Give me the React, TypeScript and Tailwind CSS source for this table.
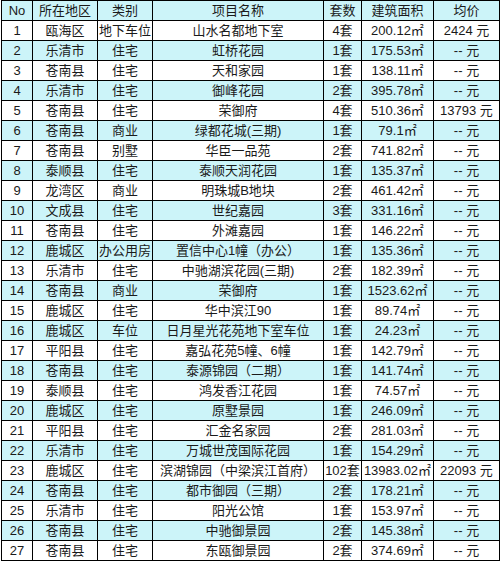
const rows: [string, string, string, string, string, string, string][] = [
  ["1", "瓯海区", "地下车位", "山水名都地下室", "4套", "200.12㎡", "2424 元"],
  ["2", "乐清市", "住宅", "虹桥花园", "1套", "175.53㎡", "-- 元"],
  ["3", "苍南县", "住宅", "天和家园", "1套", "138.11㎡", "-- 元"],
  ["4", "乐清市", "住宅", "御峰花园", "2套", "395.78㎡", "-- 元"],
  ["5", "苍南县", "住宅", "荣御府", "4套", "510.36㎡", "13793 元"],
  ["6", "苍南县", "商业", "绿都花城(三期)", "1套", "79.1㎡", "-- 元"],
  ["7", "苍南县", "别墅", "华臣一品苑", "2套", "741.82㎡", "-- 元"],
  ["8", "泰顺县", "住宅", "泰顺天润花园", "1套", "135.37㎡", "-- 元"],
  ["9", "龙湾区", "商业", "明珠城B地块", "2套", "461.42㎡", "-- 元"],
  ["10", "文成县", "住宅", "世纪嘉园", "3套", "331.16㎡", "-- 元"],
  ["11", "苍南县", "住宅", "外滩嘉园", "1套", "146.22㎡", "-- 元"],
  ["12", "鹿城区", "办公用房", "置信中心1幢（办公）", "1套", "135.36㎡", "-- 元"],
  ["13", "乐清市", "住宅", "中驰湖滨花园(三期)", "2套", "182.39㎡", "-- 元"],
  ["14", "苍南县", "商业", "荣御府", "1套", "1523.62㎡", "-- 元"],
  ["15", "鹿城区", "住宅", "华中滨江90", "1套", "89.74㎡", "-- 元"],
  ["16", "鹿城区", "车位", "日月星光花苑地下室车位", "1套", "24.23㎡", "-- 元"],
  ["17", "平阳县", "住宅", "嘉弘花苑5幢、6幢", "1套", "142.79㎡", "-- 元"],
  ["18", "苍南县", "住宅", "泰源锦园（二期）", "1套", "141.74㎡", "-- 元"],
  ["19", "泰顺县", "住宅", "鸿发香江花园", "1套", "74.57㎡", "-- 元"],
  ["20", "鹿城区", "住宅", "原墅景园", "1套", "246.09㎡", "-- 元"],
  ["21", "平阳县", "住宅", "汇金名家园", "2套", "281.03㎡", "-- 元"],
  ["22", "乐清市", "住宅", "万城世茂国际花园", "1套", "154.29㎡", "-- 元"],
  ["23", "鹿城区", "住宅", "滨湖锦园（中梁滨江首府）", "102套", "13983.02㎡", "22093 元"],
  ["24", "苍南县", "住宅", "都市御园（三期）", "2套", "178.21㎡", "-- 元"],
  ["25", "乐清市", "住宅", "阳光公馆", "1套", "153.97㎡", "-- 元"],
  ["26", "苍南县", "住宅", "中驰御景园", "2套", "145.38㎡", "-- 元"],
  ["27", "苍南县", "住宅", "东瓯御景园", "2套", "374.69㎡", "-- 元"],
]

const head = ["No", "所在地区", "类别", "项目名称", "套数", "建筑面积", "均价"]

export default function App() {
  return (
    <div className="w-[501px] h-[564px] bg-white pl-[1px] font-['Liberation_Sans','Noto_Sans_CJK_SC',sans-serif] text-[13px] text-[#1a1a1a]">
      <table className="table-fixed border-collapse w-[499px]">
        <colgroup>
          <col className="w-[31px]" />
          <col className="w-[65px]" />
          <col className="w-[55px]" />
          <col className="w-[171px]" />
          <col className="w-[38px]" />
          <col className="w-[72px]" />
          <col className="w-[66px]" />
        </colgroup>
        <thead>
          <tr className="bg-[#ccf4f9]">
            {head.map((h) => (
              <th key={h} className="h-[20px] p-0 border border-black font-normal text-center leading-[19px] whitespace-nowrap">
                {h}
              </th>
            ))}
          </tr>
        </thead>
        <tbody>
          {rows.map((r, i) => (
            <tr key={r[0]} className={i % 2 === 1 ? "bg-[#ccf4f9]" : "bg-white"}>
              {r.map((c, j) => (
                <td key={j} className="h-[20px] p-0 border border-black text-center leading-[19px] whitespace-nowrap overflow-hidden">
                  {c}
                </td>
              ))}
            </tr>
          ))}
        </tbody>
      </table>
    </div>
  )
}
